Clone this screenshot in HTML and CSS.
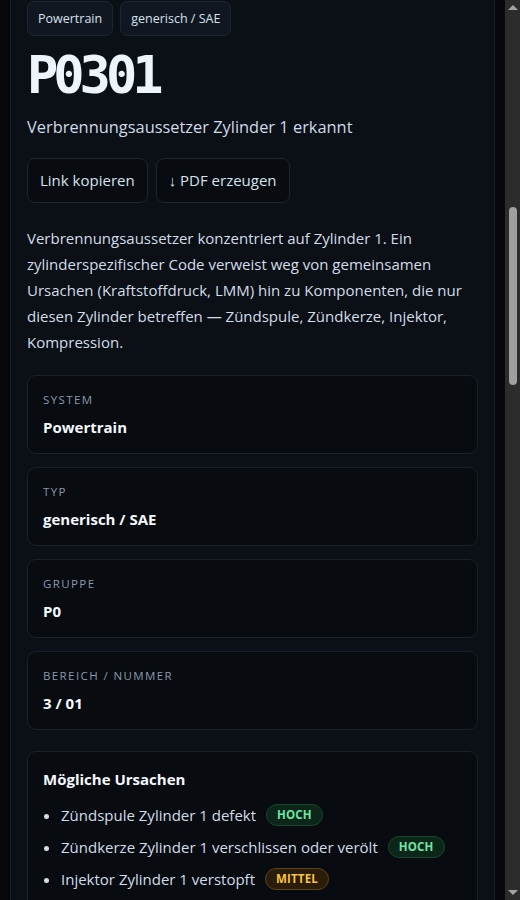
FILE: index.html
```html
<!DOCTYPE html>
<html lang="de">
<head>
    <meta charset="UTF-8">
    <meta name="viewport" content="width=device-width, initial-scale=1.0">
    <title>P0301 – Verbrennungsaussetzer Zylinder 1</title>
    <link rel="stylesheet" href="styles.css">
</head>
<body>
    <div class="page">
        <main class="panel">
            <div class="chips">
                <span class="chip">Powertrain</span>
                <span class="chip">generisch / SAE</span>
            </div>

            <h1 class="code">P0301</h1>
            <p class="subtitle">Verbrennungsaussetzer Zylinder 1 erkannt</p>

            <div class="actions">
                <button class="btn">Link kopieren</button>
                <button class="btn">&darr; PDF erzeugen</button>
            </div>

            <p class="desc">Verbrennungsaussetzer konzentriert auf Zylinder 1. Ein zylinderspezifischer Code verweist weg von gemeinsamen Ursachen (Kraftstoffdruck, LMM) hin zu Komponenten, die nur diesen Zylinder betreffen — Zündspule, Zündkerze, Injektor, Kompression.</p>

            <div class="facts">
                <div class="card">
                    <div class="label">System</div>
                    <div class="value">Powertrain</div>
                </div>
                <div class="card">
                    <div class="label">Typ</div>
                    <div class="value">generisch / SAE</div>
                </div>
                <div class="card">
                    <div class="label">Gruppe</div>
                    <div class="value">P0</div>
                </div>
                <div class="card">
                    <div class="label">Bereich / Nummer</div>
                    <div class="value">3 / 01</div>
                </div>
            </div>

            <section class="card section">
                <h2>Mögliche Ursachen</h2>
                <ul class="causes">
                    <li>Zündspule Zylinder 1 defekt <span class="badge high">HOCH</span></li>
                    <li>Zündkerze Zylinder 1 verschlissen oder verölt <span class="badge high">HOCH</span></li>
                    <li>Injektor Zylinder 1 verstopft <span class="badge mid">MITTEL</span></li>
                    <li>Kompressionsverlust an Zylinder 1 <span class="badge low">NIEDRIG</span></li>
                </ul>
            </section>

            <section class="card section">
                <h2>Typische Symptome</h2>
                <ul class="causes">
                    <li>Ruckeln im Leerlauf und beim Beschleunigen</li>
                    <li>Blinkende Motorkontrollleuchte</li>
                    <li>Leistungsverlust</li>
                </ul>
            </section>
        </main>
    </div>

    <!-- Scrollleiste wie im Browser (dunkles Theme) -->
    <div class="scrollbar">
        <span class="arrow up"></span>
        <span class="track">
            <span class="thumb"></span>
        </span>
        <span class="arrow down"></span>
    </div>
</body>
</html>
```

FILE: styles.css
```css
html,
body {
    height: 100%;
}

body {
    margin: 0;
    display: flex;
    overflow: hidden;
    background-color: #06080b;
    color: #d3dde8;
    font-family: "Segoe UI", "Open Sans", "Noto Sans", sans-serif;
}

.page {
    flex: 1;
    min-width: 0;
    overflow: hidden;
    padding: 0 10px;
}

.panel {
    margin-top: -16px;
    padding: 16px;
    background: #0b0f16;
    border: 1px solid #161d27;
    border-radius: 12px;
}

.chips {
    display: flex;
    gap: 7px;
}

.chip {
    padding: 8px 10px;
    font-size: 12.5px;
    line-height: 17px;
    color: #d6e2ee;
    background: #111720;
    border: 1px solid #1d2530;
    border-radius: 7px;
}

.code {
    margin: 9px 0 0;
    font-family: "DejaVu Sans Mono", "Liberation Mono", monospace;
    font-size: 52px;
    line-height: 60px;
    letter-spacing: -5px;
    font-weight: bold;
    color: #eef4fb;
}

.subtitle {
    margin: 10px 0 0;
    font-size: 16.4px;
    line-height: 24px;
    color: #cfdbe7;
}

.actions {
    display: flex;
    gap: 8px;
    margin-top: 19px;
}

.btn {
    padding: 12px 12px;
    font-family: inherit;
    font-size: 15px;
    line-height: 19px;
    color: #d6e2ee;
    background: #080b10;
    border: 1px solid #1d2530;
    border-radius: 8px;
    cursor: pointer;
}

.desc {
    margin: 22px 0 0;
    font-size: 15px;
    line-height: 26px;
    color: #d3dde8;
}

.facts {
    display: flex;
    flex-direction: column;
    gap: 13px;
    margin-top: 20px;
}

.card {
    padding: 16px 15px 15px;
    background: #080b10;
    border: 1px solid #19202a;
    border-radius: 9px;
}

.label {
    font-size: 11.5px;
    line-height: 16px;
    letter-spacing: 1.4px;
    text-transform: uppercase;
    color: #8a99ad;
}

.value {
    margin-top: 8px;
    font-size: 15px;
    line-height: 22px;
    font-weight: bold;
    color: #f4f8fc;
}

.section {
    margin-top: 21px;
}

.section h2 {
    margin: 0;
    font-size: 15px;
    line-height: 22px;
    font-weight: bold;
    color: #f4f8fc;
}

.causes {
    margin: 9px 0 0;
    padding-left: 18px;
    font-size: 15px;
    line-height: 22px;
}

.causes li {
    padding: 5px 0;
}

.badge {
    display: inline-block;
    margin-left: 6px;
    padding: 2px 10px;
    font-size: 11.5px;
    line-height: 16px;
    font-weight: bold;
    letter-spacing: 0.2px;
    border-radius: 999px;
    vertical-align: top;
}

.badge.high {
    color: #6ee7a4;
    background: #0c2619;
    border: 1px solid #17472c;
}

.badge.mid {
    color: #fcc43a;
    background: #2a1d0b;
    border: 1px solid #5e4114;
}

.badge.low {
    color: #fb8a8a;
    background: #2c1016;
    border: 1px solid #5e1d29;
}

.scrollbar {
    flex: 0 0 15px;
    display: flex;
    flex-direction: column;
    background: #2c2c2c;
}

.arrow {
    flex: 0 0 15px;
    display: flex;
    justify-content: center;
    align-items: center;
}

.arrow::before {
    content: "";
    border-left: 5px solid transparent;
    border-right: 5px solid transparent;
}

.arrow.up::before {
    border-bottom: 5px solid #a3a3a3;
}

.arrow.down::before {
    border-top: 5px solid #a3a3a3;
}

.track {
    flex: 1;
    display: flex;
    flex-direction: column;
    align-items: center;
}

.thumb {
    width: 8px;
    height: 178px;
    margin-top: 192px;
    background: #9f9f9f;
    border-radius: 4px;
}
```
